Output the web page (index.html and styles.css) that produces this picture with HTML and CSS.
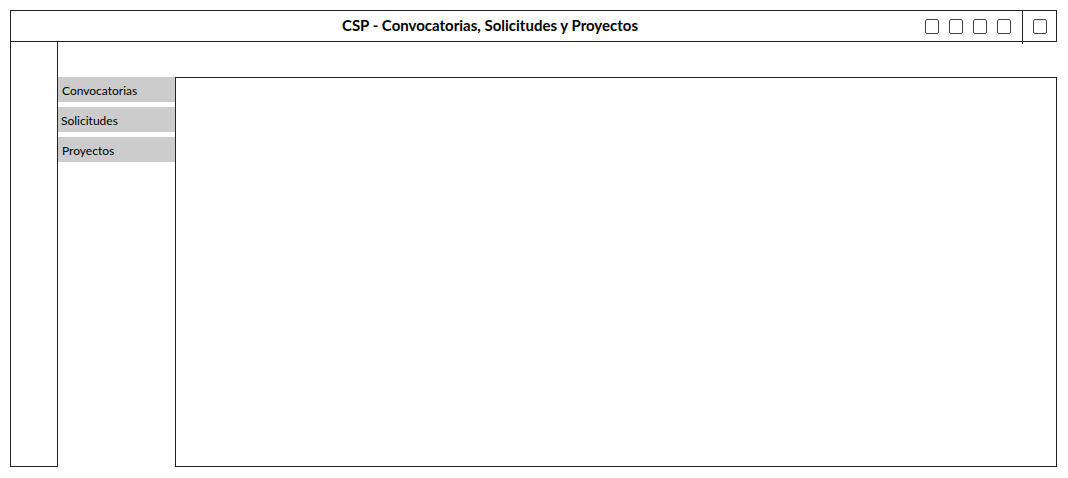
FILE: index.html
```html
<!DOCTYPE html>
<html lang="es">
<head>
    <meta charset="UTF-8">
    <title>CSP - Convocatorias, Solicitudes y Proyectos</title>
    <link rel="stylesheet" href="styles.css">
</head>
<body>
    <div class="app">
        <div class="app-header">
            <div class="app-title">CSP - Convocatorias, Solicitudes y Proyectos</div>
            <div class="tools">
                <span class="tool"></span>
                <span class="tool"></span>
                <span class="tool"></span>
                <span class="tool"></span>
            </div>
            <div class="tools-extra">
                <span class="tool"></span>
            </div>
        </div>
        <div class="app-body">
            <div class="side-rail"></div>
            <div class="side-menu">
                <div class="menu-item">Convocatorias</div>
                <div class="menu-item shift">Solicitudes</div>
                <div class="menu-item">Proyectos</div>
            </div>
            <div class="content"></div>
        </div>
    </div>
</body>
</html>
```

FILE: styles.css
```css
body {
    margin: 0;
    font-family: Lato, "Liberation Sans", Arial, sans-serif;
    background: #ffffff;
    color: #000000;
}

.app {
    padding: 10px 10px 0 10px;
    width: 1048px;
}

.app-header {
    display: flex;
    align-items: stretch;
    height: 30px;
    border: 1px solid #222;
    width: 1045px;
}

.app-title {
    flex: 1;
    text-align: center;
    font-weight: bold;
    font-size: 15px;
    line-height: 28px;
    padding-left: 44px;
    padding-right: 0;
}

.tools {
    display: flex;
    align-items: center;
    gap: 10px;
    padding-right: 11px;
}

.tool {
    display: block;
    width: 12px;
    height: 13px;
    border: 1px solid #444;
    border-radius: 2px;
}

.tools-extra {
    display: flex;
    align-items: center;
    justify-content: center;
    width: 33px;
    border-left: 1px solid #222;
    margin-bottom: -3px;
    padding-bottom: 3px;
}

.app-body {
    display: flex;
    align-items: flex-start;
}

.side-rail {
    width: 46px;
    height: 424px;
    border: 1px solid #222;
    border-top: none;
}

.side-menu {
    width: 117px;
    padding-top: 35px;
}

.menu-item {
    height: 25px;
    line-height: 27px;
    background: #cccccc;
    font-size: 12px;
    padding-left: 4px;
    margin-bottom: 5px;
}

.menu-item.shift {
    padding-left: 3px;
}

.content {
    margin-top: 35px;
    width: 880px;
    height: 388px;
    border: 1px solid #222;
}
```
